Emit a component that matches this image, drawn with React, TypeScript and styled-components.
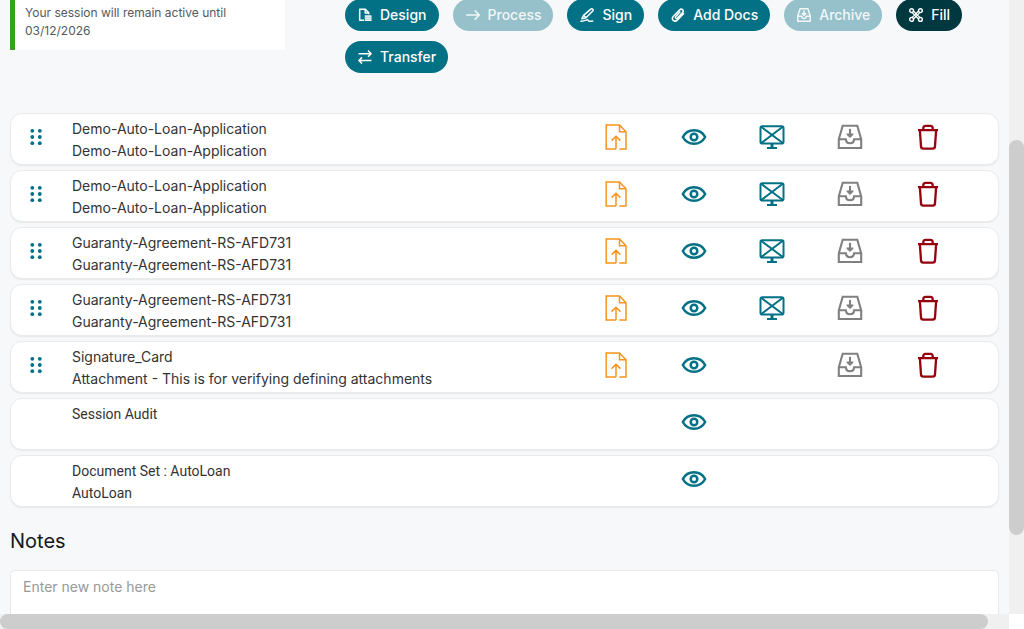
import React from "react";
import styled, { createGlobalStyle } from "styled-components";

const teal = "#027186";

const GlobalStyle = createGlobalStyle`
  *, *::before, *::after { box-sizing: border-box; }
  body {
    margin: 0;
    background: #f7f8fa;
    color: #333333;
    font-family: Inter, "Liberation Sans", sans-serif;
    font-size: 14px;
  }
`;

const Window = styled.div`
  display: grid;
  grid-template-columns: minmax(0, 1fr) 15px;
  grid-template-rows: minmax(0, 1fr) 15px;
  height: 100vh;
  overflow: hidden;
`;

const Page = styled.main`
  overflow: hidden;
  padding: 0 10px;
`;

const Track = styled.div<{ $vertical?: boolean }>`
  display: flex;
  flex-direction: ${(p) => (p.$vertical ? "column" : "row")};
  padding: ${(p) => (p.$vertical ? "140px 0 79px" : "0 21px 0 0")};
  background: #f0f0f0;
`;

const Thumb = styled.div`
  flex: 1;
  border-radius: 8px;
  background: #cdcdcd;
`;

const Corner = styled.div`
  background: #ffffff;
`;

const Header = styled.header`
  display: flex;
  align-items: flex-start;
  gap: 60px;
  min-height: 113px;
`;

const SessionNotice = styled.p`
  flex: 0 0 275px;
  margin: 0;
  padding: 4px 10px 10px;
  border-left: 5px solid #38a01f;
  background: #ffffff;
  color: #54595e;
  font-size: 12px;
  line-height: 18px;
`;

const Toolbar = styled.nav`
  display: flex;
  flex: 1;
  flex-wrap: wrap;
  gap: 10px 14px;
  margin-top: -1px;
`;

const PillButton = styled.button<{ $dark?: boolean }>`
  display: inline-flex;
  align-items: center;
  gap: 8px;
  height: 32px;
  padding: 0 12px 0 13px;
  border: 0;
  border-radius: 16px;
  background: ${(p) => (p.$dark ? "#00383f" : teal)};
  color: #ffffff;
  font-family: inherit;
  font-size: 14px;
  font-weight: 500;
  line-height: 20px;
  cursor: pointer;

  &:disabled {
    background: #96c1cb;
    color: #f1f7f8;
    cursor: default;
  }
`;

const DocumentList = styled.ul`
  display: grid;
  gap: 5px;
  margin: 0;
  padding: 0;
  list-style: none;
`;

const DocumentRow = styled.li`
  display: grid;
  grid-template-columns: 50px minmax(0, 1fr) repeat(5, 78px);
  height: 52px;
  padding: 4px 31px 0 0;
  border: 1px solid #e9ebed;
  border-radius: 12px;
  background: #ffffff;
  box-shadow: 0 1px 1px #e6e8ea;
`;

const DocumentText = styled.div<{ $system?: boolean }>`
  padding-left: 11px;
  font-family: ${(p) => (p.$system ? "Roboto" : "Inter")}, "Liberation Sans", sans-serif;
  line-height: 22px;
  white-space: nowrap;
`;

const IconButton = styled.button<{ $color: string; $column: number }>`
  display: flex;
  grid-row: 1;
  grid-column: ${(p) => p.$column};
  align-items: center;
  justify-content: center;
  height: 38px;
  padding: 0;
  border: 0;
  background: none;
  color: ${(p) => p.$color};
  cursor: pointer;
`;

const NotesSection = styled.section`
  margin-top: 20px;
`;

const NotesTitle = styled.h2`
  margin: 0 0 15px;
  color: #15181b;
  font-size: 20px;
  font-weight: 400;
  line-height: 28px;
`;

const NoteInput = styled.textarea`
  display: block;
  width: 100%;
  height: 90px;
  padding: 6px 12px;
  border: 1px solid #e6e8ea;
  border-radius: 5px;
  background: #ffffff;
  color: #333333;
  font-family: inherit;
  font-size: 14px;
  line-height: 20px;
  resize: none;

  &::placeholder {
    color: #999999;
    opacity: 1;
  }
`;

type GlyphProps = { w: number; h: number; stroke?: number; children: React.ReactNode; size?: number };

const Glyph = ({ w, h, stroke = 2, children, size }: GlyphProps) => (
  <svg
    width={size ?? w}
    height={size ?? h}
    viewBox={`0 0 ${w} ${h}`}
    fill="none"
    stroke="currentColor"
    strokeWidth={stroke}
    strokeLinejoin="round"
    aria-hidden="true"
  >
    {children}
  </svg>
);

const GripIcon = () => (
  <Glyph w={12} h={18} stroke={0}>
    {[2.8, 9, 15.2].map((y) =>
      [2.3, 9.8].map((x) => <circle key={`${x}-${y}`} cx={x} cy={y} r="1.9" fill="currentColor" />)
    )}
  </Glyph>
);

const UploadIcon = () => (
  <Glyph w={22} h={26} stroke={1.5}>
    <path d="M11 25H1.2V1H14.5L21 7.8V25H14.3M14.5 1V7.8H21M11 25V12.5M6.6 16.6L11 12.2L15.4 16.6" strokeLinejoin="miter" />
  </Glyph>
);

const EyeIcon = () => (
  <Glyph w={26} h={18} stroke={2.5}>
    <path d="M1.8 9C4 5 8 2.3 13 2.3S22 5 24.2 9C22 13 18 15.7 13 15.7S4 13 1.8 9Z" />
    <circle cx="13" cy="9" r="3.3" />
  </Glyph>
);

const MonitorIcon = () => (
  <Glyph w={26} h={24} stroke={2}>
    <rect x="1.5" y="1.2" width="23" height="17.4" rx="1.8" />
    <path d="M2.2 1.8L23.8 18M23.8 1.8L2.2 18M8 22.9H18" />
    <path d="M13 18.6V22.9" strokeWidth="3" />
  </Glyph>
);

const TrayIcon = () => (
  <Glyph w={26} h={26} stroke={2.1}>
    <path d="M5.7 1.8H20.3L24.2 15.3V24H1.8V15.3L5.7 1.8ZM1.8 15.3H8.9C9.1 18 10.7 19.2 13 19.2S16.9 18 17.1 15.3H24.2" strokeLinejoin="miter" />
    <path d="M13 4.9V12.5" />
    <path d="M9.6 9.5H16.4V10.8L13 14L9.6 10.8Z" fill="currentColor" stroke="none" />
  </Glyph>
);

const TrashIcon = () => (
  <Glyph w={22} h={26} stroke={2.3}>
    <path d="M1 6.2H21M6.3 6V4.3C6.3 2.7 7 1.8 8.6 1.8H13.4C15 1.8 15.7 2.7 15.7 4.3V6M2.9 6.5L4 22.4C4.1 23.9 4.8 24.6 6.2 24.6H15.8C17.2 24.6 17.9 23.9 18 22.4L19.1 6.5" />
  </Glyph>
);

const DesignIcon = () => (
  <Glyph w={14} h={14} stroke={1.5}>
    <path d="M6 12.2H1.7V1.3H7.4L10.7 4.8V6.2M7.2 1.3V5H10.7" />
    <path d="M6.8 7.3H13.5V13H6.8Z" fill="currentColor" stroke="none" />
    <path d="M7 9.2H13M7 11.2H13" stroke={teal} strokeWidth="0.4" />
  </Glyph>
);

const ArrowIcon = () => (
  <Glyph w={14} h={14} stroke={1.5}>
    <path d="M0.2 7H13.2M8.7 2.4L13.3 7L8.7 11.6" />
  </Glyph>
);

const SignIcon = () => (
  <Glyph w={14} h={14} stroke={1.4}>
    <path d="M1.8 10.9L3.5 7.4L10.8 1.1C12 0.3 13.8 1.5 13 2.7L6 9.8L1.8 10.9ZM3.8 7.6L6 9.6" />
    <path d="M0.4 13.2C2.5 13.4 4.4 12.9 6 12.2C7.4 11.5 8.2 11.7 8.2 12.4C8.2 13.4 10.3 13.3 13.2 13" />
  </Glyph>
);

const ClipIcon = () => (
  <Glyph w={14} h={14} stroke={1.5}>
    <path d="M9.3 3.6L4.8 8.6C3.8 9.8 5.4 11.2 6.5 10.1L11.6 4.5C13.4 2.3 10.6 -0.1 8.5 2L2.4 8.2C-0.4 11.3 3.5 14.9 6.5 11.9L13 5.3" />
  </Glyph>
);

const SmallTrayIcon = () => (
  <Glyph w={26} h={26} size={14} stroke={2.8}>
    <path d="M5.7 1.5H20.3L24.6 15.3V24.4H1.4V15.3L5.7 1.5ZM1.4 15.3H8.9C9.1 18 10.7 19.4 13 19.4S16.9 18 17.1 15.3H24.6M13 4.7V13M9 9.5L13 13.4L17 9.5" />
  </Glyph>
);

const FillIcon = () => (
  <Glyph w={14} h={14} stroke={1.4}>
    <circle cx="2.6" cy="2.6" r="1.9" />
    <circle cx="11.4" cy="2.6" r="1.9" />
    <circle cx="2.6" cy="11.4" r="1.9" />
    <circle cx="11.4" cy="11.4" r="1.9" />
    <path d="M3.2 4.6L9.4 10.8M4.6 3.2L10.8 9.4M9.4 3.2L3.2 9.4M10.8 4.6L4.6 10.8" strokeWidth="1.3" />
  </Glyph>
);

const TransferIcon = () => (
  <Glyph w={14} h={14} stroke={1.5}>
    <path d="M0.5 3.7H13M10 0.6L13.1 3.7L10 6.8M13.5 10.5H1M4 7.4L0.9 10.5L4 13.6" />
  </Glyph>
);

const toolbarItems = [
  { label: "Design", Icon: DesignIcon },
  { label: "Process", Icon: ArrowIcon, disabled: true },
  { label: "Sign", Icon: SignIcon },
  { label: "Add Docs", Icon: ClipIcon },
  { label: "Archive", Icon: SmallTrayIcon, disabled: true },
  { label: "Fill", Icon: FillIcon, dark: true },
  { label: "Transfer", Icon: TransferIcon },
];

const actions = {
  drag: { label: "Reorder", Icon: GripIcon, color: teal, column: 1 },
  upload: { label: "Upload", Icon: UploadIcon, color: "#f7941d", column: 3 },
  view: { label: "View", Icon: EyeIcon, color: teal, column: 4 },
  hide: { label: "Hide on screen", Icon: MonitorIcon, color: teal, column: 5 },
  archive: { label: "Archive", Icon: TrayIcon, color: "#808080", column: 6 },
  remove: { label: "Delete", Icon: TrashIcon, color: "#96000f", column: 7 },
};

type Action = keyof typeof actions;

const all: Action[] = ["drag", "upload", "view", "hide", "archive", "remove"];

const documents: { title: string; detail?: string; actions: Action[]; system?: boolean }[] = [
  { title: "Demo-Auto-Loan-Application", detail: "Demo-Auto-Loan-Application", actions: all },
  { title: "Demo-Auto-Loan-Application", detail: "Demo-Auto-Loan-Application", actions: all },
  { title: "Guaranty-Agreement-RS-AFD731", detail: "Guaranty-Agreement-RS-AFD731", actions: all },
  { title: "Guaranty-Agreement-RS-AFD731", detail: "Guaranty-Agreement-RS-AFD731", actions: all },
  {
    title: "Signature_Card",
    detail: "Attachment - This is for verifying defining attachments",
    actions: ["drag", "upload", "view", "archive", "remove"],
  },
  { title: "Session Audit", actions: ["view"], system: true },
  { title: "Document Set : AutoLoan", detail: "AutoLoan", actions: ["view"], system: true },
];

const ActionButton = ({ name }: { name: Action }) => {
  const { label, Icon, color, column } = actions[name];
  return (
    <IconButton type="button" aria-label={label} $color={color} $column={column}>
      <Icon />
    </IconButton>
  );
};

export default function App() {
  return (
    <>
      <GlobalStyle />
      <Window>
        <Page>
          <Header>
            <SessionNotice>Your session will remain active until 03/12/2026</SessionNotice>
            <Toolbar aria-label="Session actions">
              {toolbarItems.map(({ label, Icon, disabled, dark }) => (
                <PillButton key={label} type="button" disabled={disabled} $dark={dark}>
                  <Icon />
                  {label}
                </PillButton>
              ))}
            </Toolbar>
          </Header>
          <DocumentList>
            {documents.map((doc, index) => (
              <DocumentRow key={index}>
                {doc.actions.includes("drag") ? <ActionButton name="drag" /> : <span />}
                <DocumentText $system={doc.system}>
                  <div>{doc.title}</div>
                  {doc.detail && <div>{doc.detail}</div>}
                </DocumentText>
                {doc.actions
                  .filter((name) => name !== "drag")
                  .map((name) => (
                    <ActionButton key={name} name={name} />
                  ))}
              </DocumentRow>
            ))}
          </DocumentList>
          <NotesSection>
            <NotesTitle id="notes-title">Notes</NotesTitle>
            <NoteInput aria-labelledby="notes-title" placeholder="Enter new note here" />
          </NotesSection>
        </Page>
        <Track $vertical>
          <Thumb />
        </Track>
        <Track>
          <Thumb />
        </Track>
        <Corner />
      </Window>
    </>
  );
}
